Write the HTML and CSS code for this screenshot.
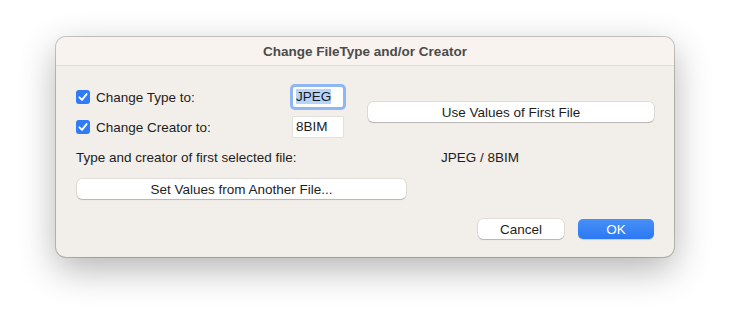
FILE: index.html
```html
<!DOCTYPE html>
<html lang="en">

<head>
    <meta charset="UTF-8">
    <meta name="viewport" content="width=device-width, initial-scale=1.0">
    <title>Change FileType and/or Creator</title>
    <link rel="stylesheet" href="styles.css">
</head>

<body>
    <div class="dialog">
        <div class="titlebar">Change FileType and/or Creator</div>

        <div class="content">
            <div class="top">
                <div class="fields">
                    <div class="field-row">
                        <span class="checkbox">
                            <svg viewBox="0 0 14 14" width="14" height="14"><path d="M3.4 7.3 L6 9.9 L10.6 4.1" fill="none" stroke="#fff" stroke-width="1.9" stroke-linecap="round" stroke-linejoin="round"/></svg>
                        </span>
                        <span class="label">Change Type to:</span>
                        <span class="input focused"><span class="selected">JPEG</span></span>
                    </div>
                    <div class="field-row">
                        <span class="checkbox">
                            <svg viewBox="0 0 14 14" width="14" height="14"><path d="M3.4 7.3 L6 9.9 L10.6 4.1" fill="none" stroke="#fff" stroke-width="1.9" stroke-linecap="round" stroke-linejoin="round"/></svg>
                        </span>
                        <span class="label">Change Creator to:</span>
                        <span class="input">8BIM</span>
                    </div>
                </div>
                <button class="btn wide">Use Values of First File</button>
            </div>

            <div class="info-row">
                <span class="info-label">Type and creator of first selected file:</span>
                <span class="info-value">JPEG / 8BIM</span>
            </div>

            <button class="btn another">Set Values from Another File...</button>

            <div class="actions">
                <button class="btn cancel">Cancel</button>
                <button class="btn primary">OK</button>
            </div>
        </div>
    </div>
</body>

</html>
```

FILE: styles.css
```css
/* General Styles */
html {
    height: 100%;
    background-color: #fff;
}

body {
    margin: 0;
    min-height: 100%;
    box-sizing: border-box;
    padding: 37px 0 0 56px;
    font-family: "Liberation Sans", Arial, sans-serif;
    font-size: 13.5px;
    color: #1d1d1d;
}

.dialog {
    width: 618px;
    height: 220px;
    box-sizing: border-box;
    background-color: #f2eeea;
    border-radius: 10px;
    box-shadow: 0 0 0 1px rgba(0, 0, 0, 0.2), 0 12px 36px rgba(0, 0, 0, 0.3);
    overflow: hidden;
}

.titlebar {
    height: 28px;
    line-height: 30px;
    background-color: #f9f3ef;
    border-bottom: 1px solid #e0dcd8;
    text-align: center;
    font-weight: bold;
    color: #4b4b4b;
}

.content {
    padding: 21px 20px 0 20px;
}

/* Checkbox rows + first-file button */
.top {
    display: flex;
    align-items: center;
}

.fields {
    display: flex;
    flex-direction: column;
    gap: 10px;
    width: 292px;
}

.field-row {
    display: flex;
    align-items: center;
    height: 20px;
}

.checkbox {
    width: 14px;
    height: 14px;
    border-radius: 3px;
    background-color: #2f7cf6;
    display: flex;
}

.label {
    margin-left: 6px;
    width: 197px;
}

.input {
    width: 50px;
    height: 20px;
    box-sizing: border-box;
    background-color: #fff;
    padding: 2px 3px;
    line-height: 16px;
    color: #1a1a1a;
    box-shadow: 0 0 0 0.5px rgba(0, 0, 0, 0.12);
}

.input.focused {
    box-shadow: 0 0 0 3px #8eb6f3;
    border-radius: 2px;
}

.selected {
    background-color: #b4d4fb;
}

.btn {
    font-family: "Liberation Sans", Arial, sans-serif;
    font-size: 13.5px;
    color: #1d1d1d;
    height: 20px;
    padding: 0;
    border: none;
    border-radius: 5px;
    background-color: #fff;
    box-shadow: 0 0 0 0.5px rgba(0, 0, 0, 0.15), 0 1px 1px rgba(0, 0, 0, 0.18);
    cursor: pointer;
}

.wide {
    width: 286px;
}

/* Info row */
.info-row {
    display: flex;
    margin-top: 13px;
    line-height: 16px;
}

.info-label {
    width: 365px;
}

.another {
    display: block;
    width: 329px;
    margin: 13px 0 0 1px;
}

/* Bottom buttons */
.actions {
    display: flex;
    justify-content: flex-end;
    gap: 14px;
    margin-top: 20px;
}

.cancel {
    width: 86px;
}

.primary {
    width: 76px;
    color: #fff;
    background: linear-gradient(#4790f8, #2c78f2);
    box-shadow: 0 1px 1px rgba(0, 0, 0, 0.15);
}
```
